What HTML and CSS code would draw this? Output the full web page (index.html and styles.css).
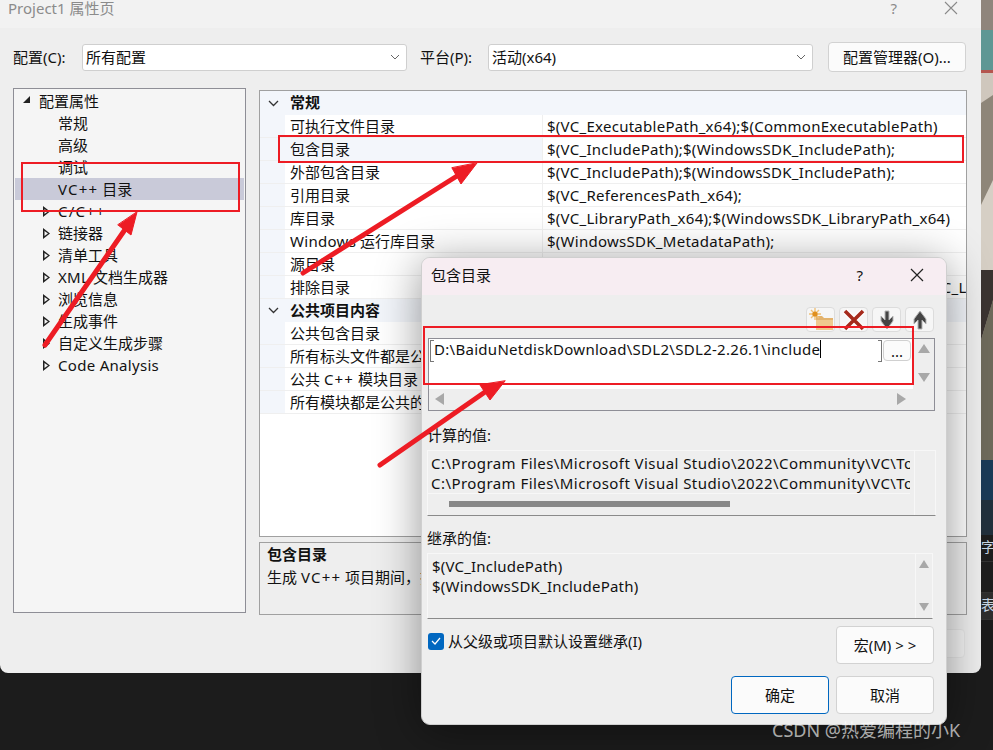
FILE: index.html
```html
<!DOCTYPE html>
<html lang="zh-CN">
<head>
<meta charset="utf-8">
<title>Project1 属性页</title>
<link rel="stylesheet" href="styles.css">
</head>
<body>
<div class="desktop">
  <main class="window">
    <header class="titlebar">
      <span class="title">Project1 属性页</span>
      <span class="help">?</span>
      <svg class="close" width="14" height="14" viewBox="0 0 14 14"><path d="M1 1L13 13M13 1L1 13" stroke="#8a8a8a" stroke-width="1.1" fill="none"/></svg>
    </header>
    <div class="toolbar">
      <span class="lbl lbl-a">配置(C):</span>
      <div class="select"><span>所有配置</span><svg width="10" height="6" viewBox="0 0 10 6"><path d="M1 1L5 5L9 1" stroke="#666" fill="none"/></svg></div>
      <span class="lbl lbl-b">平台(P):</span>
      <div class="select"><span>活动(x64)</span><svg width="10" height="6" viewBox="0 0 10 6"><path d="M1 1L5 5L9 1" stroke="#666" fill="none"/></svg></div>
      <div class="mgr">配置管理器(O)...</div>
    </div>
    <div class="content">
      <nav class="tree">
        <div class="node root"><i class="tri-open"></i>配置属性</div>
        <div class="node leaf">常规</div>
        <div class="node leaf">高级</div>
        <div class="node leaf">调试</div>
        <div class="node leaf sel"><span class="cpp">VC++</span>&nbsp;目录</div>
        <div class="node"><i class="tri"></i><span class="cpp">C/C++</span></div>
        <div class="node"><i class="tri"></i>链接器</div>
        <div class="node"><i class="tri"></i>清单工具</div>
        <div class="node"><i class="tri"></i><span class="la">XML</span>&nbsp;文档生成器</div>
        <div class="node"><i class="tri"></i>浏览信息</div>
        <div class="node"><i class="tri"></i>生成事件</div>
        <div class="node"><i class="tri"></i>自定义生成步骤</div>
        <div class="node"><i class="tri"></i><span class="la">Code Analysis</span></div>
      </nav>
      <section class="right">
        <div class="grid">
          <div class="group first"><svg width="11" height="7" viewBox="0 0 11 7"><path d="M1 1L5.5 5.5L10 1" stroke="#333" stroke-width="1.3" fill="none"/></svg><b>常规</b></div>
          <div class="row"><span class="name">可执行文件目录</span><span class="val">$(VC_ExecutablePath_x64);$(CommonExecutablePath)</span></div>
          <div class="row picked"><span class="name">包含目录</span><span class="val">$(VC_IncludePath);$(WindowsSDK_IncludePath);</span></div>
          <div class="row"><span class="name">外部包含目录</span><span class="val">$(VC_IncludePath);$(WindowsSDK_IncludePath);</span></div>
          <div class="row"><span class="name">引用目录</span><span class="val">$(VC_ReferencesPath_x64);</span></div>
          <div class="row"><span class="name">库目录</span><span class="val">$(VC_LibraryPath_x64);$(WindowsSDK_LibraryPath_x64)</span></div>
          <div class="row"><span class="name"><span class="la">Windows</span> 运行库目录</span><span class="val">$(WindowsSDK_MetadataPath);</span></div>
          <div class="row"><span class="name">源目录</span><span class="val">$(VC_SourcePath);</span></div>
          <div class="row"><span class="name">排除目录</span><span class="val">$(CommonExcludePath);$(VC_ExecutablePath_x64);$(VC_LibraryPath_x64)</span></div>
          <div class="group"><svg width="11" height="7" viewBox="0 0 11 7"><path d="M1 1L5.5 5.5L10 1" stroke="#333" stroke-width="1.3" fill="none"/></svg><b>公共项目内容</b></div>
          <div class="row"><span class="name">公共包含目录</span><span class="val"></span></div>
          <div class="row"><span class="name">所有标头文件都是公共的</span><span class="val">否</span></div>
          <div class="row"><span class="name">公共 <span class="cpp">C++</span> 模块目录</span><span class="val"></span></div>
          <div class="row"><span class="name">所有模块都是公共的</span><span class="val">否</span></div>
        </div>
        <div class="desc">
          <b>包含目录</b>
          <span>生成 <span class="cpp">VC++</span> 项目期间，搜索包含文件时使用的路径。</span>
        </div>
      </section>
    </div>
    <footer class="winfoot"><div class="apply">应用(A)</div></footer>
  </main>
  <aside class="strip">
    <svg class="art" width="12" height="535" viewBox="0 0 12 535">
      <rect width="12" height="535" fill="#8f857c"/>
      <rect y="30" width="12" height="40" fill="#5e9794"/>
      <rect y="70" width="12" height="3" fill="#b4564f"/>
      <rect y="73" width="12" height="30" fill="#cfc7bd"/>
      <polygon points="0,103 12,95 12,205 0,205" fill="#8e8679"/>
      <polygon points="0,205 12,180 12,270 0,270" fill="#d6cfc5"/>
      <polygon points="0,270 12,270 12,300 0,340" fill="#3b3431"/>
      <polygon points="0,340 12,300 12,460 0,460" fill="#6e6a5b"/>
      <rect y="460" width="12" height="40" fill="#1b3a57"/>
      <rect y="500" width="12" height="35" fill="#22303c"/>
    </svg>
    <div class="cell">字符</div>
    <div class="cell gap"></div>
    <div class="cell band">表格</div>
  </aside>
</div>
<div class="under"></div>

<section class="dialog">
  <header class="dtitle">
    <span>包含目录</span>
    <span class="dhelp">?</span>
    <svg class="dclose" width="14" height="14" viewBox="0 0 14 14"><path d="M1 1L13 13M13 1L1 13" stroke="#222" stroke-width="1.2" fill="none"/></svg>
  </header>
  <div class="dbody">
    <div class="tools">
      <div class="tool"><svg width="26" height="23" viewBox="0 0 26 23"><path d="M8 8H14L16 10H25V22H8Z" fill="#e3b36d"/><path d="M8 12H25V22H8Z" fill="#efc98f"/><path d="M7 0V12M1 6H13M3 2L11 10M11 2L3 10" stroke="#f0c178" stroke-width="1.4"/><circle cx="7" cy="6" r="2.6" fill="#e08f1c"/></svg></div>
      <div class="tool"><svg width="24" height="22" viewBox="0 0 24 22"><path d="M3 2L21 20M21 2L3 20" stroke="#fff" stroke-width="6" fill="none"/><path d="M3 2L21 20M21 2L3 20" stroke="#a52a1c" stroke-width="3.6" fill="none"/></svg></div>
      <div class="tool"><svg width="20" height="22" viewBox="0 0 20 22"><path d="M8 2H12V11L16 7V12L10 20L4 12V7L8 11Z" fill="#444" stroke="#b5b5b5"/></svg></div>
      <div class="tool"><svg width="20" height="22" viewBox="0 0 20 22"><path d="M8 20H12V11L16 15V10L10 2L4 10V15L8 11Z" fill="#444" stroke="#b5b5b5"/></svg></div>
    </div>
    <div class="listbox">
      <div class="listmain">
        <div class="entry">
          <div class="edit"><span>D:\BaiduNetdiskDownload\SDL2\SDL2-2.26.1\include</span><i class="caret"></i></div>
          <div class="dots">...</div>
        </div>
        <div class="hbar">
          <svg width="9" height="12" viewBox="0 0 9 12"><polygon points="9,0 9,12 0,6" fill="#a8a8a8"/></svg>
          <svg width="9" height="12" viewBox="0 0 9 12"><polygon points="0,0 0,12 9,6" fill="#a8a8a8"/></svg>
        </div>
      </div>
      <div class="vbar">
        <svg width="12" height="9" viewBox="0 0 12 9"><polygon points="0,9 12,9 6,0" fill="#a8a8a8"/></svg>
        <svg width="12" height="9" viewBox="0 0 12 9"><polygon points="0,0 12,0 6,9" fill="#a8a8a8"/></svg>
      </div>
    </div>
    <div class="dlabel first-label">计算的值:</div>
    <div class="valbox">
      <div class="vcol">
        <div class="lines">
          <div>C:\Program Files\Microsoft Visual Studio\2022\Community\VC\Tools\MSVC\14.34.31933\bin\HostX64\x64</div>
          <div>C:\Program Files\Microsoft Visual Studio\2022\Community\VC\Tools\MSVC\14.34.31933\lib\x64</div>
        </div>
        <div class="thumbrow"><i class="thumb"></i></div>
      </div>
    </div>
    <div class="dlabel">继承的值:</div>
    <div class="valbox inh">
      <div class="vcol">
        <div class="lines">
          <div>$(VC_IncludePath)</div>
          <div>$(WindowsSDK_IncludePath)</div>
        </div>
      </div>
      <div class="vbar2">
        <svg width="10" height="8" viewBox="0 0 10 8"><polygon points="0,8 10,8 5,0" fill="#a8a8a8"/></svg>
        <svg width="10" height="8" viewBox="0 0 10 8"><polygon points="0,0 10,0 5,8" fill="#a8a8a8"/></svg>
      </div>
    </div>
    <div class="inherit">
      <label class="check"><i class="box"><svg width="12" height="10" viewBox="0 0 12 10"><path d="M2 5L5 8L10 2" stroke="#fff" stroke-width="1.2" fill="none"/></svg></i>从父级或项目默认设置继承(I)</label>
      <div class="btn">宏(M) &gt; &gt;</div>
    </div>
    <div class="actions">
      <div class="btn primary">确定</div>
      <div class="btn">取消</div>
    </div>
  </div>
</section>

<div class="watermark">CSDN @热爱编程的小K</div>

<div class="mark mark-a"></div>
<div class="mark mark-b"></div>
<div class="mark mark-c"></div>
<svg class="arrows" width="993" height="750" viewBox="0 0 993 750">
  <g fill="#ed1c24" stroke="#ed1c24" stroke-linecap="round">
    <line x1="45" y1="345" x2="124" y2="231" stroke-width="5"/>
    <polygon points="137,212 131,235 118,225" stroke-width="1"/>
    <line x1="303" y1="273" x2="457" y2="176" stroke-width="5"/>
    <polygon points="477,163 461,184 452,168" stroke-width="1"/>
    <line x1="380" y1="465" x2="485" y2="392" stroke-width="5"/>
    <polygon points="505,381 490,400 480,385" stroke-width="1"/>
  </g>
</svg>
</body>
</html>
```
FILE: styles.css
```css
* { box-sizing: border-box; }
html, body { margin: 0; padding: 0; }
body {
  width: 993px;
  height: 750px;
  overflow: hidden;
  position: relative;
  background: #1c1c1c;
  color: #111;
  font-family: "Noto Sans", "Noto Sans CJK SC", sans-serif;
  font-size: 15px;
  line-height: 20px;
}
.desktop { display: flex; height: 673px; }
.under { height: 77px; background: #1c1c1c; }
.la { letter-spacing: 0.3px; }
.cpp { letter-spacing: 1.2px; }

.window {
  width: 981px;
  height: 673px;
  background: #eeeeee;
  border-radius: 0 0 8px 8px;
  padding: 0 14px 0 13px;
  display: flex;
  flex-direction: column;
}
.titlebar {
  margin: 0 -14px 0 -13px;
  height: 28px;
  padding: 0 23px 12px 8px;
  background: #f2f2f2;
  display: flex;
  align-items: center;
  color: #8b8b8b;
  line-height: 16px;
}
.title { flex: 1; }
.help { margin-right: 47px; }

.toolbar { display: flex; align-items: center; height: 30px; margin-top: 14px; }
.lbl-a { width: 69px; }
.lbl-b { width: 68px; margin-left: 13px; }
.select {
  width: 325px;
  height: 27px;
  background: #fff;
  border: 1px solid #cfcfcf;
  border-radius: 3px;
  padding: 0 6px 0 3px;
  display: flex;
  align-items: center;
  justify-content: space-between;
}
.mgr {
  width: 138px;
  height: 30px;
  margin-left: 15px;
  background: #fbfbfb;
  border: 1px solid #d2d2d2;
  border-radius: 4px;
  display: flex;
  align-items: center;
  justify-content: center;
}

.content { display: flex; gap: 13px; margin-top: 16px; }
.tree {
  width: 233px;
  height: 525px;
  background: #f5f5f5;
  border: 1px solid #8e8e96;
  flex: none;
}
.node {
  height: 22px;
  padding-left: 43px;
  position: relative;
  display: flex;
  align-items: center;
  margin: 0 1px;
  white-space: nowrap;
}
.node.sel { background: #c9cad9; }
.node.root { padding-left: 24px; height: 23px; }
.tri-open {
  position: absolute;
  left: 8px;
  top: 7px;
  width: 0;
  height: 0;
  border-left: 7px solid transparent;
  border-bottom: 7px solid #222;
}
.tri {
  position: absolute;
  left: 28px;
  top: 6px;
  width: 7px;
  height: 11px;
  background: #222;
  clip-path: polygon(0 0, 100% 50%, 0 100%, 0 0, 1.5px 3px, 1.5px calc(100% - 3px), calc(100% - 2px) 50%, 1.5px 3px);
}

.right { width: 708px; margin-top: 2px; flex: none; }
.grid {
  height: 447px;
  background: #fff;
  border: 1px solid #a0a0a0;
  overflow: hidden;
}
.group {
  height: 23px;
  background: #f3f6fb;
  display: flex;
  align-items: center;
  padding-left: 8px;
}
.group b { margin-top: -2px; }
.group.first { height: 24px; }
.group svg { flex: none; margin-right: 11px; }
.row {
  height: 23px;
  display: flex;
  align-items: center;
  padding-left: 25px;
  background: linear-gradient(90deg, #f3f6fb 25px, #fff 25px);
  box-shadow: inset 0 -1px 0 #efefef;
  white-space: nowrap;
}
.name {
  width: 258px;
  height: 23px;
  line-height: 22px;
  padding-left: 5px;
  border-right: 1px solid #efefef;
  flex: none;
  overflow: hidden;
}
.picked .name { background: #f3f6fb; }
.val {
  flex: 1;
  height: 23px;
  line-height: 22px;
  padding-left: 4px;
  overflow: hidden;
  letter-spacing: 0.27px;
}
.desc {
  height: 73px;
  margin-top: 5px;
  border: 1px solid #a0a0a0;
  padding: 1px 7px;
  display: flex;
  flex-direction: column;
  gap: 3px;
  white-space: nowrap;
  overflow: hidden;
}
.winfoot { display: flex; justify-content: flex-end; margin-top: 14px; padding-right: 2px; }
.apply {
  width: 98px;
  height: 29px;
  background: #f3f3f3;
  border: 1px solid #e6e6e6;
  border-radius: 4px;
  color: #6f90b8;
  display: flex;
  align-items: center;
  justify-content: center;
}

.strip { width: 12px; height: 673px; overflow: hidden; flex: none; }
.art { display: block; }
.cell {
  height: 27px;
  line-height: 24px;
  width: 12px;
  font-size: 14px;
  color: #c8d6e4;
  white-space: nowrap;
  overflow: hidden;
  background: #1e1e1e;
  border-bottom: 1px solid #333;
}
.cell.gap { height: 31px; }
.cell.band { background: #2e2e2e; height: 27px; }

.dialog {
  position: absolute;
  left: 421px;
  top: 257px;
  width: 526px;
  height: 468px;
  background: #eeeeee;
  border: 1px solid #cfcfcf;
  border-radius: 9px;
  box-shadow: 0 6px 45px rgba(0, 0, 0, 0.42);
  overflow: hidden;
}
.dtitle {
  height: 37px;
  background: #f7edf2;
  display: flex;
  align-items: center;
  padding: 0 22px 3px 9px;
}
.dtitle span:first-child { flex: 1; }
.dhelp { margin-right: 47px; }
.dbody { padding: 0 10px 0 5px; }
.tools { display: flex; justify-content: flex-end; gap: 4px; margin-top: 12px; padding-right: 2px; }
.tool {
  width: 29px;
  height: 25px;
  background: #f6f6f6;
  border: 1px solid #dcdcdc;
  border-radius: 4px;
  display: flex;
  align-items: center;
  justify-content: center;
  overflow: hidden;
}
.listbox {
  width: 507px;
  height: 73px;
  margin: 6px 0 0 1px;
  border: 1px solid #8e8e96;
  display: flex;
}
.listmain { width: 484px; display: flex; flex-direction: column; }
.entry {
  height: 50px;
  background: #fff;
  padding: 1px 2px 0 1px;
  display: flex;
  align-items: flex-start;
}
.edit {
  width: 453px;
  height: 22px;
  border-left: 1px solid #777;
  border-right: 1px solid #777;
  background:
    linear-gradient(#777, #777) left top / 3px 1px no-repeat,
    linear-gradient(#777, #777) left bottom / 3px 1px no-repeat,
    linear-gradient(#777, #777) right top / 3px 1px no-repeat,
    linear-gradient(#777, #777) right bottom / 3px 1px no-repeat;
  padding: 0 0 4px 3px;
  line-height: 18px;
  display: flex;
  align-items: center;
  white-space: nowrap;
  letter-spacing: 0.29px;
}
.caret { width: 1px; height: 18px; background: #000; flex: none; }
.dots {
  width: 28px;
  height: 21px;
  margin-left: 1px;
  background: #fbfbfb;
  border: 1px solid #d0d0d0;
  border-radius: 4px;
  text-align: center;
  line-height: 20px;
}
.hbar {
  flex: 1;
  display: flex;
  align-items: center;
  justify-content: space-between;
  padding: 0 7px 2px 6px;
}
.vbar {
  flex: 1;
  height: 50px;
  display: flex;
  flex-direction: column;
  justify-content: space-between;
  align-items: center;
  padding: 5px 0 7px;
}
.dlabel { height: 20px; margin-top: 12px; }
.first-label { margin-top: 14px; margin-bottom: 1px; }
.valbox {
  width: 509px;
  height: 66px;
  margin-top: 5px;
  border: 1px solid #f7f7f7;
  border-bottom: 1px solid #8a8a8a;
  display: flex;
}
.valbox.inh { width: 506px; }
.vcol { width: 487px; flex: none; border-right: 1px solid #f7f7f7; }
.lines { width: 482px; padding: 2px 5px 0 3px; height: 43px; border-bottom: 1px solid #f7f7f7; overflow: hidden; white-space: nowrap; letter-spacing: 0.44px; }
.inh .vcol { width: 488px; }
.inh .lines { width: 487px; padding-left: 4px; border-bottom: 0; height: 64px; letter-spacing: 0.2px; }
.thumbrow { height: 20px; padding: 7px 0 0 21px; }
.thumb { display: block; width: 281px; height: 6px; background: #888; }
.vbar2 {
  flex: 1;
  display: flex;
  flex-direction: column;
  align-items: center;
  justify-content: space-between;
  padding: 6px 0 7px;
}
.inherit { display: flex; justify-content: space-between; align-items: center; margin-top: 7px; padding-right: 2px; }
.check { display: flex; align-items: center; gap: 4px; padding-left: 1px; margin-bottom: 8px; }
.box {
  width: 16px;
  height: 17px;
  background: #0067c0;
  border-radius: 3px;
  display: flex;
  align-items: center;
  justify-content: center;
}
.btn {
  width: 98px;
  height: 38px;
  background: #fbfbfb;
  border: 1px solid #d2d2d2;
  border-radius: 4px;
  display: flex;
  align-items: center;
  justify-content: center;
}
.btn.primary { border-color: #0067c0; }
.actions { display: flex; justify-content: flex-end; gap: 7px; margin-top: 12px; padding-right: 2px; }

.watermark {
  position: absolute;
  left: 772px;
  top: 718px;
  font-size: 18px;
  line-height: 24px;
  color: rgba(255, 255, 255, 0.65);
  white-space: nowrap;
}
.mark { position: absolute; border: 2px solid #ed1c24; }
.mark-a { left: 21px; top: 162px; width: 219px; height: 50px; }
.mark-b { left: 278px; top: 135px; width: 686px; height: 28px; }
.mark-c { left: 423px; top: 326px; width: 491px; height: 59px; }
.arrows { position: absolute; left: 0; top: 0; pointer-events: none; }
```
